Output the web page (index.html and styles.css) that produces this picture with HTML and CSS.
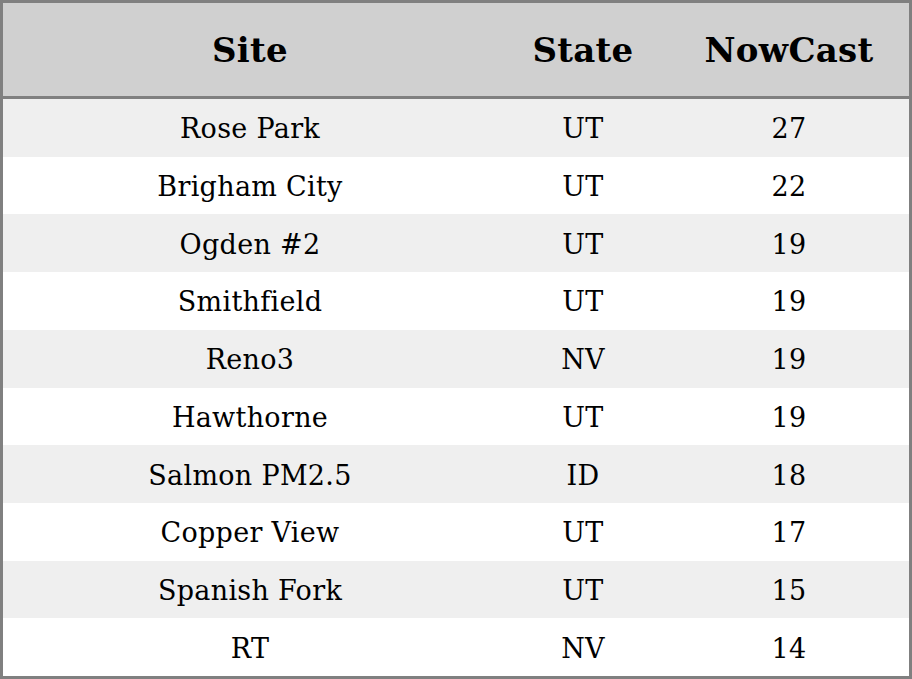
FILE: index.html
```html
<!DOCTYPE html>
<html>
<head>
<meta charset="utf-8">
<link rel="stylesheet" href="styles.css">
</head>
<body>
<div class="table">
  <div class="row head">
    <div class="cell">Site</div><div class="cell">State</div><div class="cell">NowCast</div>
  </div>
  <div class="body">
    <div class="row odd"><div class="cell">Rose Park</div><div class="cell">UT</div><div class="cell">27</div></div>
    <div class="row"><div class="cell">Brigham City</div><div class="cell">UT</div><div class="cell">22</div></div>
    <div class="row odd"><div class="cell">Ogden #2</div><div class="cell">UT</div><div class="cell">19</div></div>
    <div class="row"><div class="cell">Smithfield</div><div class="cell">UT</div><div class="cell">19</div></div>
    <div class="row odd"><div class="cell">Reno3</div><div class="cell">NV</div><div class="cell">19</div></div>
    <div class="row"><div class="cell">Hawthorne</div><div class="cell">UT</div><div class="cell">19</div></div>
    <div class="row odd"><div class="cell">Salmon PM2.5</div><div class="cell">ID</div><div class="cell">18</div></div>
    <div class="row"><div class="cell">Copper View</div><div class="cell">UT</div><div class="cell">17</div></div>
    <div class="row odd"><div class="cell">Spanish Fork</div><div class="cell">UT</div><div class="cell">15</div></div>
    <div class="row"><div class="cell">RT</div><div class="cell">NV</div><div class="cell">14</div></div>
  </div>
</div>
</body>
</html>
```
FILE: styles.css
```css
html, body {
  margin: 0;
  padding: 0;
  background: #ffffff;
}
.table {
  box-sizing: border-box;
  width: 912px;
  height: 679px;
  border: 3px solid #808080;
  display: flex;
  flex-direction: column;
  font-family: "DejaVu Serif", serif;
  color: #000;
}
.row {
  display: grid;
  grid-template-columns: 494px 172px 1fr;
  align-items: center;
  text-align: center;
}
.head {
  height: 93px;
  flex: none;
  background: #d0d0d0;
  border-bottom: 3px solid #808080;
  font-weight: bold;
  font-size: 34px;
  letter-spacing: 0.3px;
}
.body {
  flex: 1;
  display: grid;
  grid-template-rows: repeat(10, 1fr);
  font-size: 27px;
  letter-spacing: 0.3px;
}
.body .cell {
  padding-top: 2px;
}
.odd {
  background: #efefef;
}
```
